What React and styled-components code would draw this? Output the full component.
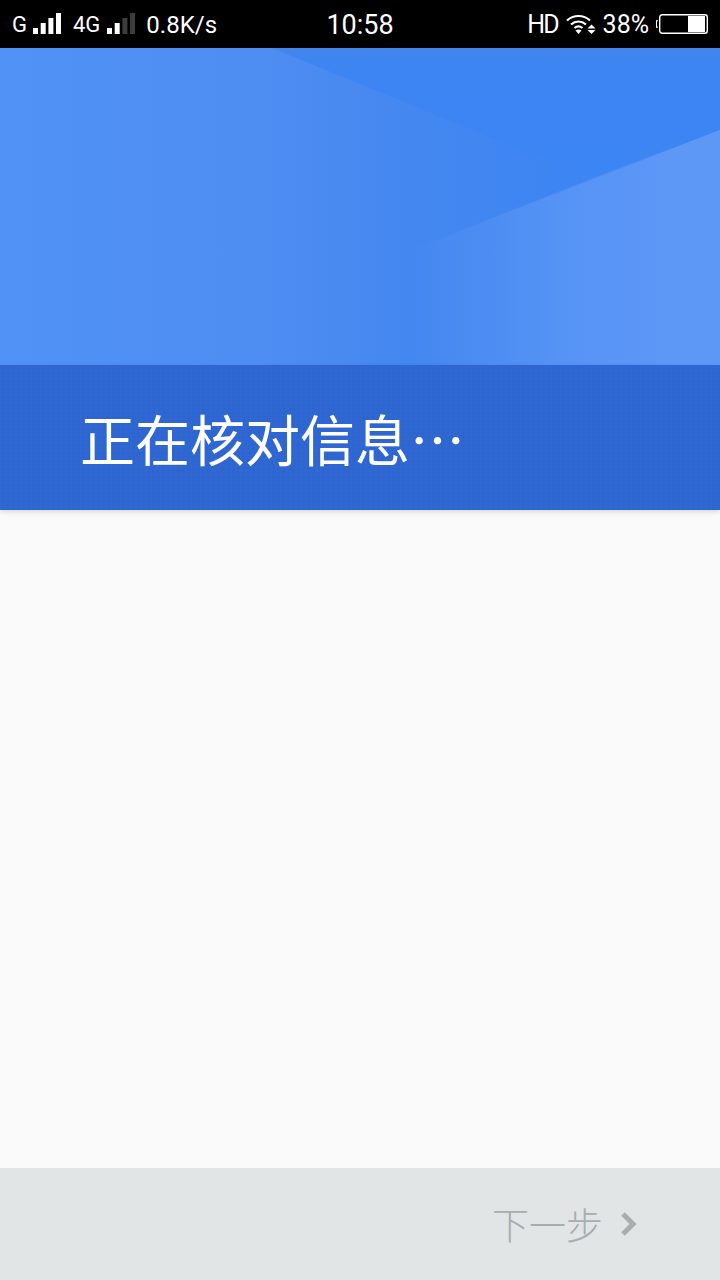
import styled, { createGlobalStyle } from "styled-components";

const GlobalStyle = createGlobalStyle`
	html, body {
		margin: 0;
		padding: 0;
		background: #fafafa;
	}
`;

const Page = styled.div`
	width: 720px;
	height: 1280px;
	display: flex;
	flex-direction: column;
	overflow: hidden;
	font-family: "Roboto", "Noto Sans CJK SC", sans-serif;
`;

const StatusBar = styled.div`
	height: 48px;
	flex-shrink: 0;
	background: #000;
	color: #fff;
	display: grid;
	grid-template-columns: 1fr auto 1fr;
	align-items: center;
	padding: 2px 12px 0;
	box-sizing: border-box;
`;

const StatusSide = styled.div`
	display: flex;
	align-items: center;
	justify-content: ${(p) => (p.$right ? "flex-end" : "flex-start")};
`;

const StatusText = styled.span`
	font-size: ${(p) => p.$size || 24}px;
	font-weight: 400;
	line-height: 30px;
	letter-spacing: ${(p) => p.$tight || 0}px;
	margin-left: ${(p) => p.$gap || 0}px;
	white-space: nowrap;
`;

const Clock = styled.span`
	font-size: 27px;
	font-weight: 400;
	line-height: 30px;
`;

const StatusIcon = styled.svg`
	display: block;
	flex-shrink: 0;
	margin-left: ${(p) => p.$gap || 0}px;
	margin-bottom: ${(p) => p.$lift || 0}px;
`;

const Hero = styled.div`
	height: 317px;
	flex-shrink: 0;
	background: #4d8cf2;

	svg {
		display: block;
	}
`;

const Band = styled.div`
	height: 145px;
	flex-shrink: 0;
	background-color: #2e66d2;
	background-image: repeating-linear-gradient(
			90deg,
			rgba(255, 255, 255, 0.01) 0 2px,
			transparent 2px 5px
		),
		repeating-linear-gradient(0deg, rgba(0, 0, 0, 0.01) 0 2px, transparent 2px 4px);
	display: flex;
	align-items: center;
	padding: 0 0 2px 80px;
	box-sizing: border-box;
	box-shadow: 0 2px 5px rgba(0, 0, 0, 0.14);
	position: relative;
`;

const Title = styled.h1`
	margin: 0;
	color: #fff;
	font-family: "Noto Sans CJK SC", sans-serif;
	font-size: 55px;
	font-weight: 400;
	line-height: 70px;
	white-space: nowrap;
`;

const Content = styled.div`
	flex: 1;
	background: #fafafa;
`;

const Footer = styled.div`
	height: 112px;
	flex-shrink: 0;
	background: #e1e5e6;
	display: flex;
	align-items: center;
	justify-content: flex-end;
	padding-right: 82px;
	color: #a9adae;
`;

const NextLabel = styled.span`
	font-family: "Noto Sans CJK SC", sans-serif;
	font-size: 37px;
	font-weight: 300;
	line-height: 48px;
`;

const NextArrow = styled.svg`
	width: 18px;
	height: 26px;
	margin-left: 17px;
`;

const SignalBars = ({ lit, gap }) => (
	<StatusIcon width="28" height="21" viewBox="0 0 28 21" $gap={gap} $lift={3}>
		{[
			[0, 15],
			[7.7, 10],
			[15.4, 5],
			[23, 0],
		].map(([x, y], i) => (
			<rect key={x} x={x} y={y} width="5" height={21 - y} fill={i < lit ? "#fff" : "#3c3c3c"} />
		))}
	</StatusIcon>
);

const Wifi = () => (
	<StatusIcon width="30" height="20" viewBox="0 0 30 20" fill="none" $gap={8} $lift={3}>
		<path d="M1 6.5C7.5 0.5 17.5 0.5 24 6.5" stroke="#fff" strokeWidth="2.2" />
		<path d="M5 10.5C9.5 6.5 15.5 6.5 20 10.5" stroke="#fff" strokeWidth="2.2" />
		<path d="M8.5 14C11 12 14 12 16.5 14" stroke="#fff" strokeWidth="2.2" />
		<path d="M9.5 16.5C11.2 15 13.8 15 15.5 16.5L12.5 20Z" fill="#fff" />
		<path d="M25.5 10.5L29.5 14.5H21.5ZM25.5 20L29.5 16H21.5Z" fill="#fff" />
	</StatusIcon>
);

const Battery = () => (
	<StatusIcon width="52" height="22" viewBox="0 0 52 22" $gap={7} $lift={3}>
		<rect x="3.7" y="1.7" width="47.6" height="18.6" rx="2.5" fill="none" stroke="#fff" strokeWidth="1.4" />
		<rect x="32" y="3" width="17" height="16" fill="#fff" />
		<path d="M1.2 7C0.2 9 0.2 13 1.2 15" fill="none" stroke="#fff" strokeWidth="1.4" />
	</StatusIcon>
);

const HeroArt = () => (
	<svg width="720" height="317" viewBox="0 0 720 317">
		<defs>
			<linearGradient id="left" x1="0" y1="0" x2="590" y2="0" gradientUnits="userSpaceOnUse">
				<stop offset="0" stopColor="#5092f5" />
				<stop offset="0.45" stopColor="#4e8df2" />
				<stop offset="0.7" stopColor="#4487f0" />
				<stop offset="1" stopColor="#3c85f3" />
			</linearGradient>
			<linearGradient id="upper" x1="0" y1="0" x2="0" y2="131" gradientUnits="userSpaceOnUse">
				<stop offset="0" stopColor="#4386ec" />
				<stop offset="0.15" stopColor="#3d85f3" />
				<stop offset="1" stopColor="#3c85f4" />
			</linearGradient>
			<linearGradient id="lower" x1="412" y1="0" x2="680" y2="0" gradientUnits="userSpaceOnUse">
				<stop offset="0" stopColor="#4487f0" />
				<stop offset="0.55" stopColor="#5593f5" />
				<stop offset="1" stopColor="#5e98f7" />
			</linearGradient>
		</defs>
		<polygon points="0,0 272,0 590,131 412,202 412,317 0,317" fill="url(#left)" />
		<polygon points="272,0 720,0 720,82 590,131" fill="url(#upper)" />
		<polygon points="720,82 720,317 412,317 412,202" fill="url(#lower)" />
	</svg>
);

const App = () => {
	return (
		<>
			<GlobalStyle />
			<Page>
				<StatusBar>
					<StatusSide>
						<StatusText $size={22}>G</StatusText>
						<SignalBars lit={4} gap={6} />
						<StatusText $gap={12} $size={22}>4G</StatusText>
						<SignalBars lit={2} gap={7} />
						<StatusText $gap={11}>0.8K/s</StatusText>
					</StatusSide>
					<Clock>10:58</Clock>
					<StatusSide $right>
						<StatusText $size={25} $tight={-2}>HD</StatusText>
						<Wifi />
						<StatusText $gap={7} $size={25}>38%</StatusText>
						<Battery />
					</StatusSide>
				</StatusBar>
				<Hero>
					<HeroArt />
				</Hero>
				<Band>
					<Title>正在核对信息…</Title>
				</Band>
				<Content />
				<Footer>
					<NextLabel>下一步</NextLabel>
					<NextArrow viewBox="0 0 18 26" fill="none">
						<path d="M3 3L13 13L3 23" stroke="#a9adae" strokeWidth="5" />
					</NextArrow>
				</Footer>
			</Page>
		</>
	);
};

export default App;
